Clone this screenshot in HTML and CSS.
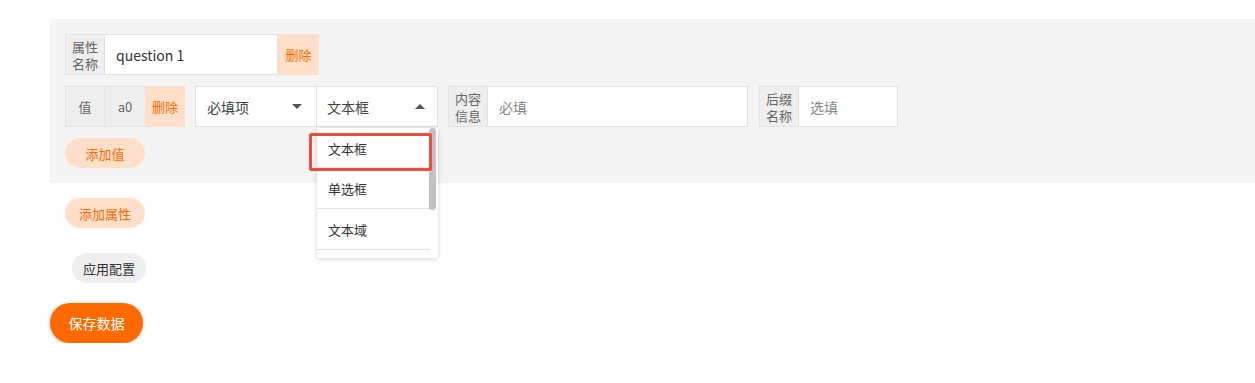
FILE: index.html
```html
<!DOCTYPE html>
<html lang="zh">
<head>
    <meta charset="UTF-8">
    <meta name="viewport" content="width=device-width, initial-scale=1.0">
    <title>属性配置</title>
    <link rel="stylesheet" href="styles.css">
</head>
<body>
    <div class="attr-panel">
        <div class="row">
            <div class="label">属性名称</div>
            <div class="field name-field">question 1</div>
            <div class="del">删除</div>
        </div>
        <div class="row">
            <div class="label single">值</div>
            <div class="label single value">a0</div>
            <div class="del">删除</div>
            <div class="select select-req">
                <span>必填项</span>
                <span class="caret down"></span>
            </div>
            <div class="select select-type">
                <span>文本框</span>
                <span class="caret up"></span>
                <div class="dropdown">
                    <div class="item active">文本框</div>
                    <div class="item">单选框</div>
                    <div class="item">文本域</div>
                    <div class="scrollbar"></div>
                </div>
            </div>
            <div class="label">内容信息</div>
            <div class="field content-field placeholder">必填</div>
            <div class="label">后缀名称</div>
            <div class="field suffix-field placeholder">选填</div>
        </div>
        <button class="pill light">添加值</button>
    </div>

    <button class="pill light add-attr">添加属性</button>
    <button class="pill gray apply">应用配置</button>
    <button class="pill save">保存数据</button>
</body>
</html>
```

FILE: styles.css
```css
body {
    margin: 0;
    font-family: "Noto Sans CJK SC", "Noto Sans", sans-serif;
    color: #333;
    background-color: #fff;
}
.attr-panel {
    margin: 19px 0 0 50px;
    padding: 15px;
    background-color: #f4f4f4;
    display: flex;
    flex-direction: column;
    align-items: flex-start;
    gap: 11px;
}
.row {
    display: flex;
    height: 41px;
}
.row > div {
    flex-shrink: 0;
}
.label {
    width: 40px;
    box-sizing: border-box;
    padding: 0 5px;
    background-color: #eee;
    border: 1px solid #e2e2e2;
    font-size: 13px;
    line-height: 17px;
    color: #666;
    display: flex;
    align-items: center;
    justify-content: center;
    text-align: center;
}
.label.single {
    width: 39px;
    border-right: none;
}
.label.value {
    width: 41px;
    border-left: 1px solid #e6e6e6;
}
.field {
    box-sizing: border-box;
    background-color: #fff;
    border: 1px solid #e2e2e2;
    border-left: none;
    padding: 0 11px;
    font-size: 14px;
    display: flex;
    align-items: center;
    margin-right: 10px;
}
.name-field {
    width: 173px;
    margin-right: 0;
    color: #333;
}
.content-field {
    width: 260px;
    margin-right: 11px;
}
.suffix-field {
    width: 99px;
}
.placeholder {
    color: #888;
}
.del {
    width: 41px;
    background-color: #ffdfca;
    color: #ff6a00;
    font-size: 13px;
    display: flex;
    align-items: center;
    justify-content: center;
}
.row .del {
    width: 40px;
    margin-right: 10px;
}
.row:first-child .del {
    width: 41px;
    margin-right: 0;
}
.select {
    position: relative;
    box-sizing: border-box;
    background-color: #fff;
    border: 1px solid #e2e2e2;
    padding: 0 12px 0 11px;
    font-size: 14px;
    color: #444;
    display: flex;
    align-items: center;
    justify-content: space-between;
}
.select-req {
    width: 122px;
}
.select-type {
    width: 121px;
    border-left: none;
    padding-left: 10px;
    margin-right: 10px;
}
.caret {
    width: 0;
    height: 0;
    border-left: 5px solid transparent;
    border-right: 5px solid transparent;
}
.caret.down {
    border-top: 5px solid #555;
    margin-right: 2px;
}
.caret.up {
    border-bottom: 5px solid #555;
}
.dropdown {
    position: absolute;
    top: 41px;
    left: 0;
    width: 121px;
    height: 130px;
    box-sizing: border-box;
    padding-right: 8px;
    background-color: #fff;
    box-shadow: 0 1px 5px rgba(0, 0, 0, 0.18);
    z-index: 2;
}
.item {
    position: relative;
    height: 41px;
    box-sizing: border-box;
    padding-left: 11px;
    line-height: 41px;
    font-size: 13px;
    color: #333;
    border-bottom: 1px solid #e2e2e2;
}
.item.active {
    height: 40px;
}
.item.active::after {
    content: "";
    position: absolute;
    left: -8px;
    right: -2px;
    top: 5px;
    bottom: -4px;
    border: 3px solid #ef4a3e;
    border-radius: 2px;
    z-index: 2;
}
.scrollbar {
    position: absolute;
    top: 0;
    right: 2px;
    width: 7px;
    height: 82px;
    background-color: #c1c1c1;
    border-radius: 4px;
    z-index: 1;
}
.pill {
    display: block;
    border: none;
    border-radius: 15px;
    height: 30px;
    width: 80px;
    padding: 0;
    font-family: inherit;
    font-size: 13px;
    cursor: pointer;
}
.light {
    background-color: #ffdfca;
    color: #ff6a00;
}
.add-attr {
    margin: 15px 0 0 65px;
}
.gray {
    background-color: #eee;
    color: #333;
}
.apply {
    margin: 25px 0 0 72px;
    width: 74px;
}
.save {
    margin: 20px 0 0 50px;
    width: 93px;
    height: 40px;
    border-radius: 20px;
    background-color: #ff6a00;
    color: #fff;
    font-size: 14px;
    box-shadow: 0 1px 4px rgba(0, 0, 0, 0.25);
}
```
